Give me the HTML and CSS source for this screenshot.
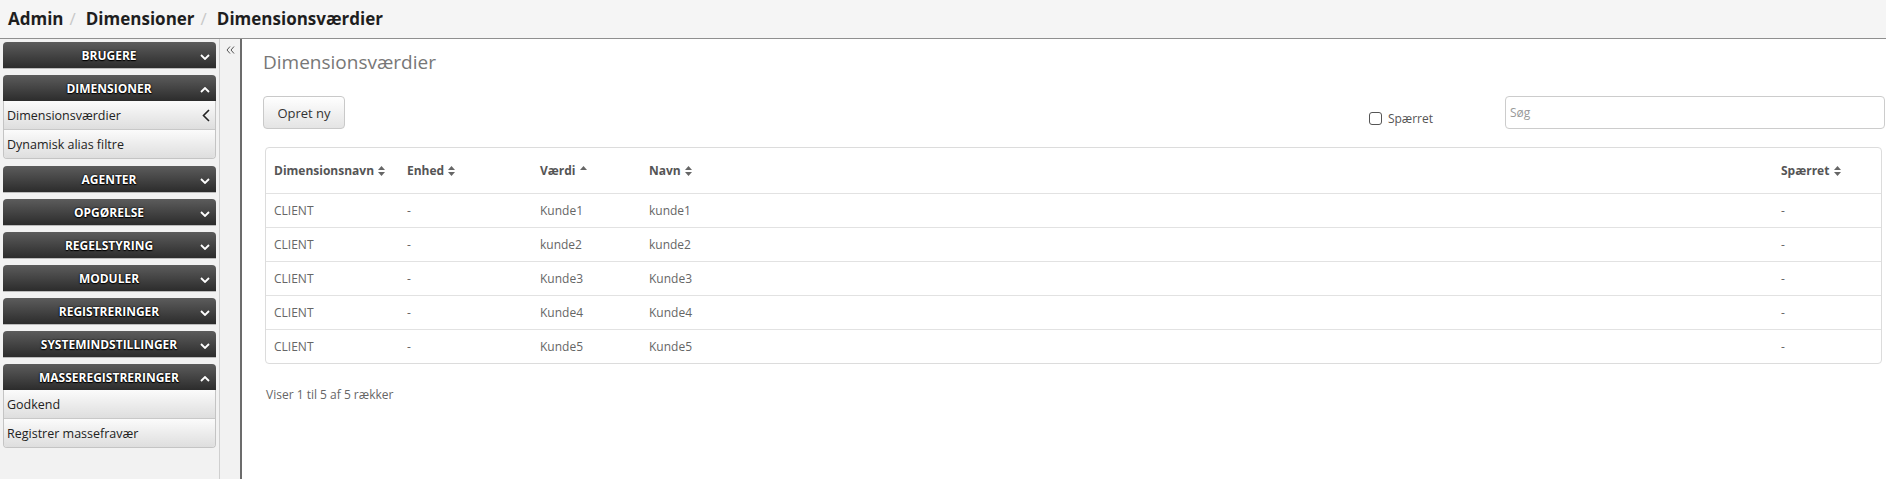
FILE: index.html
```html
<!DOCTYPE html>
<html lang="da">
<head>
<meta charset="utf-8">
<title>Dimensionsværdier</title>
<link rel="stylesheet" href="styles.css">
</head>
<body>
<header class="topbar">
  <nav class="crumbs">
    <span class="crumb">Admin</span><span class="sep">/</span><span class="crumb">Dimensioner</span><span class="sep">/</span><span class="crumb">Dimensionsværdier</span>
  </nav>
</header>
<div class="layout">
  <aside class="sidebar">
    <div class="group">
      <div class="ghead"><span class="gtitle">BRUGERE</span><svg class="chev" width="10" height="6" viewBox="0 0 10 6"><polyline points="1,1 5,5 9,1" fill="none" stroke="#fff" stroke-width="1.8"/></svg></div>
    </div>
    <div class="group">
      <div class="ghead"><span class="gtitle">DIMENSIONER</span><svg class="chev" width="10" height="6" viewBox="0 0 10 6"><polyline points="1,5 5,1 9,5" fill="none" stroke="#fff" stroke-width="1.8"/></svg></div>
      <div class="gitems">
        <div class="gitem active"><span>Dimensionsværdier</span><svg width="8" height="13" viewBox="0 0 8 13"><polyline points="7,1 1.5,6.5 7,12" fill="none" stroke="#222" stroke-width="1.6"/></svg></div>
        <div class="gitem"><span>Dynamisk alias filtre</span></div>
      </div>
    </div>
    <div class="group">
      <div class="ghead"><span class="gtitle">AGENTER</span><svg class="chev" width="10" height="6" viewBox="0 0 10 6"><polyline points="1,1 5,5 9,1" fill="none" stroke="#fff" stroke-width="1.8"/></svg></div>
    </div>
    <div class="group">
      <div class="ghead"><span class="gtitle">OPGØRELSE</span><svg class="chev" width="10" height="6" viewBox="0 0 10 6"><polyline points="1,1 5,5 9,1" fill="none" stroke="#fff" stroke-width="1.8"/></svg></div>
    </div>
    <div class="group">
      <div class="ghead"><span class="gtitle">REGELSTYRING</span><svg class="chev" width="10" height="6" viewBox="0 0 10 6"><polyline points="1,1 5,5 9,1" fill="none" stroke="#fff" stroke-width="1.8"/></svg></div>
    </div>
    <div class="group">
      <div class="ghead"><span class="gtitle">MODULER</span><svg class="chev" width="10" height="6" viewBox="0 0 10 6"><polyline points="1,1 5,5 9,1" fill="none" stroke="#fff" stroke-width="1.8"/></svg></div>
    </div>
    <div class="group">
      <div class="ghead"><span class="gtitle">REGISTRERINGER</span><svg class="chev" width="10" height="6" viewBox="0 0 10 6"><polyline points="1,1 5,5 9,1" fill="none" stroke="#fff" stroke-width="1.8"/></svg></div>
    </div>
    <div class="group">
      <div class="ghead"><span class="gtitle">SYSTEMINDSTILLINGER</span><svg class="chev" width="10" height="6" viewBox="0 0 10 6"><polyline points="1,1 5,5 9,1" fill="none" stroke="#fff" stroke-width="1.8"/></svg></div>
    </div>
    <div class="group">
      <div class="ghead"><span class="gtitle">MASSEREGISTRERINGER</span><svg class="chev" width="10" height="6" viewBox="0 0 10 6"><polyline points="1,5 5,1 9,5" fill="none" stroke="#fff" stroke-width="1.8"/></svg></div>
      <div class="gitems">
        <div class="gitem"><span>Godkend</span></div>
        <div class="gitem"><span>Registrer massefravær</span></div>
      </div>
    </div>
  </aside>
  <div class="collapser">
    <svg width="9" height="8" viewBox="0 0 9 8"><polyline points="4,0.5 1,4 4,7.5" fill="none" stroke="#555" stroke-width="1"/><polyline points="8,0.5 5,4 8,7.5" fill="none" stroke="#555" stroke-width="1"/></svg>
  </div>
  <main class="main">
    <h1 class="title">Dimensionsværdier</h1>
    <div class="toolbar">
      <button class="btn">Opret ny</button>
      <label class="check"><span class="box"></span><span>Spærret</span></label>
      <input class="search" type="text" placeholder="Søg">
    </div>
    <div class="tablewrap">
      <table class="grid">
        <colgroup>
          <col class="w1"><col class="w2"><col class="w3"><col><col class="w5">
        </colgroup>
        <thead>
          <tr>
            <th>Dimensionsnavn <svg class="sort" width="7" height="10" viewBox="0 0 7 10"><polygon points="0,4 3.5,0 7,4" fill="#666"/><polygon points="0,6 3.5,10 7,6" fill="#666"/></svg></th>
            <th>Enhed <svg class="sort" width="7" height="10" viewBox="0 0 7 10"><polygon points="0,4 3.5,0 7,4" fill="#666"/><polygon points="0,6 3.5,10 7,6" fill="#666"/></svg></th>
            <th>Værdi <svg class="sort" width="7" height="10" viewBox="0 0 7 10"><polygon points="0,4 3.5,0 7,4" fill="#666"/></svg></th>
            <th>Navn <svg class="sort" width="7" height="10" viewBox="0 0 7 10"><polygon points="0,4 3.5,0 7,4" fill="#666"/><polygon points="0,6 3.5,10 7,6" fill="#666"/></svg></th>
            <th>Spærret <svg class="sort" width="7" height="10" viewBox="0 0 7 10"><polygon points="0,4 3.5,0 7,4" fill="#666"/><polygon points="0,6 3.5,10 7,6" fill="#666"/></svg></th>
          </tr>
        </thead>
        <tbody>
          <tr><td>CLIENT</td><td>-</td><td>Kunde1</td><td>kunde1</td><td>-</td></tr>
          <tr><td>CLIENT</td><td>-</td><td>kunde2</td><td>kunde2</td><td>-</td></tr>
          <tr><td>CLIENT</td><td>-</td><td>Kunde3</td><td>Kunde3</td><td>-</td></tr>
          <tr><td>CLIENT</td><td>-</td><td>Kunde4</td><td>Kunde4</td><td>-</td></tr>
          <tr><td>CLIENT</td><td>-</td><td>Kunde5</td><td>Kunde5</td><td>-</td></tr>
        </tbody>
      </table>
    </div>
    <p class="info">Viser 1 til 5 af 5 rækker</p>
  </main>
</div>
</body>
</html>
```
FILE: styles.css
```css
* { box-sizing: border-box; }
html, body { margin: 0; padding: 0; }
body {
  font-family: "Open Sans", "Liberation Sans", sans-serif;
  background: #fff;
  color: #333;
  height: 479px;
  overflow: hidden;
  display: flex;
  flex-direction: column;
}
.topbar {
  height: 39px;
  background: #f5f5f5;
  border-bottom: 1px solid #8f8f8f;
  padding-left: 8px;
  flex: none;
}
.crumbs {
  font-size: 17px;
  font-weight: 700;
  line-height: 38px;
  color: #1e1e1e;
  white-space: nowrap;
}
.sep {
  color: #c8c8c8;
  font-weight: 400;
  padding: 0 10px 0 6px;
}
.layout {
  flex: 1;
  display: flex;
  min-height: 0;
}
.sidebar {
  width: 220px;
  flex: none;
  background: #f2f2f2;
  border-right: 1px solid #cfcfcf;
  padding: 3px 3px 0 3px;
}
.group {
  margin-bottom: 7px;
}
.ghead {
  height: 26px;
  border-radius: 4px 4px 0 0;
  background: linear-gradient(#5c5c5c, #2c2c2c);
  display: flex;
  align-items: center;
  padding: 0 5px 0 15px;
  box-shadow: 0 1px 0 #bbb;
}
.gtitle {
  flex: 1;
  text-align: center;
  color: #fff;
  font-size: 12px;
  font-weight: 700;
  text-shadow: 0 0 2px #000, 0 1px 1px #000, 0 0 1px #000;
}
.chev {
  margin-top: 4px;
  margin-right: 1px;
}
.gitems {
  border: 1px solid #c4c4c4;
  border-top: none;
  border-radius: 0 0 4px 4px;
  overflow: hidden;
}
.gitem {
  height: 29px;
  display: flex;
  align-items: center;
  justify-content: space-between;
  padding: 0 5px 0 3px;
  background: linear-gradient(#fbfbfb, #dedede);
  border-top: 1px solid #c8c8c8;
  font-size: 12.5px;
  color: #222;
}
.gitem:first-child { border-top: none; height: 28px; }
.collapser {
  width: 22px;
  flex: none;
  background: #f2f2f2;
  border-right: 2px solid #6c6c6c;
  display: flex;
  justify-content: center;
  padding-top: 7px;
  padding-left: 1px;
}
.main {
  flex: 1;
  min-width: 0;
  padding: 0 1px 0 21px;
  background: #fff;
}
.title {
  margin: 10px 0 0 0;
  font-size: 19px;
  font-weight: 400;
  color: #777;
  line-height: 27px;
}
.toolbar {
  display: flex;
  align-items: flex-start;
  margin-top: 20px;
}
.btn {
  font-family: inherit;
  font-size: 13px;
  color: #333;
  height: 33px;
  width: 82px;
  border: 1px solid #c9c9c9;
  border-radius: 4px;
  background: linear-gradient(#fff, #e4e4e4);
  padding: 0;
}
.check {
  margin-left: auto;
  margin-top: 14px;
  display: flex;
  align-items: center;
  font-size: 12px;
  color: #555;
}
.box {
  width: 13px;
  height: 13px;
  border: 1px solid #555;
  border-radius: 3px;
  background: #fff;
  margin-right: 6px;
}
.search {
  margin-left: 72px;
  width: 380px;
  height: 33px;
  border: 1px solid #ccc;
  border-radius: 4px;
  font-family: inherit;
  font-size: 12px;
  padding: 0 4px;
  color: #555;
}
.search::placeholder { color: #999; }
.tablewrap {
  margin: 18px 3px 0 2px;
  border: 1px solid #dcdcdc;
  border-radius: 4px;
  overflow: hidden;
}
.grid {
  width: 100%;
  border-collapse: collapse;
  table-layout: fixed;
  font-size: 12px;
}
.w1 { width: 133px; }
.w2 { width: 133px; }
.w3 { width: 109px; }
.w5 { width: 108px; }
.grid th {
  height: 45px;
  text-align: left;
  font-weight: 700;
  color: #555;
  padding: 0 8px;
  white-space: nowrap;
}
.grid td {
  height: 34px;
  padding: 0 8px;
  color: #666;
  border-top: 1px solid #e2e2e2;
}
.sort { vertical-align: -1px; margin-left: 1px; }
.info {
  margin: 22px 0 0 3px;
  font-size: 12px;
  color: #666;
}
```
